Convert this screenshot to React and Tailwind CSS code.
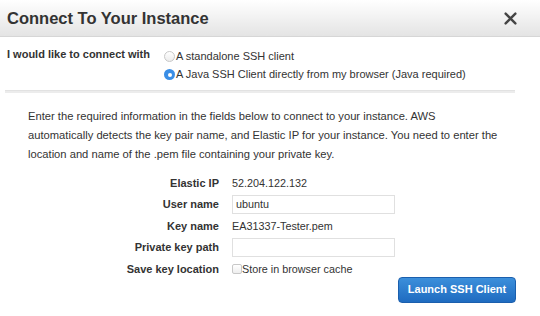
import React from "react";

export default function App() {
  const rows = [
    { label: "Elastic IP", value: "52.204.122.132" },
    { label: "User name", input: "ubuntu" },
    { label: "Key name", value: "EA31337-Tester.pem" },
    { label: "Private key path", input: "" },
  ];

  return (
    <div className="w-[540px] h-[316px] overflow-hidden bg-white text-[#333] font-['Liberation_Sans',Arial,sans-serif]">
      {/* Header */}
      <div className="h-[37px] flex items-center justify-between pl-[7px] pr-[23px] bg-gradient-to-b from-white to-[#e4e4e4] border-b border-[#d6d6d6]">
        <h1 className="text-[16.5px] font-bold text-[#333]">Connect To Your Instance</h1>
        <svg width="13" height="13" viewBox="0 0 12 12" className="text-[#444]">
          <path d="M1.5 1.5 L10.5 10.5 M10.5 1.5 L1.5 10.5" stroke="currentColor" strokeWidth="2.2" strokeLinecap="round" />
        </svg>
      </div>

      {/* Connection method */}
      <div className="flex pl-[7px] pt-[11px] h-[53px]">
        <div className="w-[157px] text-[11px] leading-[13px] font-bold text-[#333]">I would like to connect with</div>
        <div className="flex flex-col gap-[5px] pt-[2px] text-[11px] leading-[13px] text-[#333]">
          <label className="flex items-center">
            <span className="w-[11px] h-[11px] rounded-full border border-[#c8c8c8] bg-gradient-to-b from-white to-[#ececec]" />
            <span className="ml-[1px]">A standalone SSH client</span>
          </label>
          <label className="flex items-center">
            <span className="w-[11px] h-[11px] rounded-full bg-[#3a8ee6] flex items-center justify-center">
              <span className="w-[4px] h-[4px] rounded-full bg-white" />
            </span>
            <span className="ml-[1px]">A Java SSH Client directly from my browser (Java required)</span>
          </label>
        </div>
      </div>

      <div className="mx-[5px] mr-[25px] h-[3px] bg-[#ececec] border-t border-[#e2e2e2]" />

      {/* Description */}
      <p className="pl-[28px] w-[500px] pt-[14px] text-[11.2px] leading-[19px] text-[#333]">
        Enter the required information in the fields below to connect to your instance. AWS automatically detects the key pair name, and Elastic IP for your instance. You need to enter the location and name of the .pem file containing your private key.
      </p>

      {/* Form */}
      <div className="mt-[8px] flex flex-col">
        {rows.map((r) => (
          <div key={r.label} className="flex items-center h-[21.5px]">
            <div className="w-[219px] text-right text-[11px] font-bold text-[#333]">{r.label}</div>
            <div className="ml-[13px] text-[10.8px] text-[#333]">
              {r.input !== undefined ? (
                <div className="w-[163px] h-[19px] border border-[#e0e0e0] px-[3px] flex items-center bg-white">{r.input}</div>
              ) : (
                r.value
              )}
            </div>
          </div>
        ))}
        <div className="flex items-center h-[21.5px]">
          <div className="w-[219px] text-right text-[11px] font-bold text-[#333]">Save key location</div>
          <label className="ml-[13px] flex items-center text-[10.8px] text-[#333]">
            <span className="w-[10px] h-[10px] rounded-[2px] border border-[#c8c8c8] bg-gradient-to-b from-white to-[#eee]" />
            <span>Store in browser cache</span>
          </label>
        </div>
        <div className="flex justify-end pr-[24px] -mt-[3px]">
          <button className="w-[118px] h-[26px] rounded-[4px] bg-gradient-to-b from-[#3c8fdb] to-[#1f6bc0] border border-[#1b5fad] text-white text-[11px] font-bold">
            Launch SSH Client
          </button>
        </div>
      </div>
    </div>
  );
}
